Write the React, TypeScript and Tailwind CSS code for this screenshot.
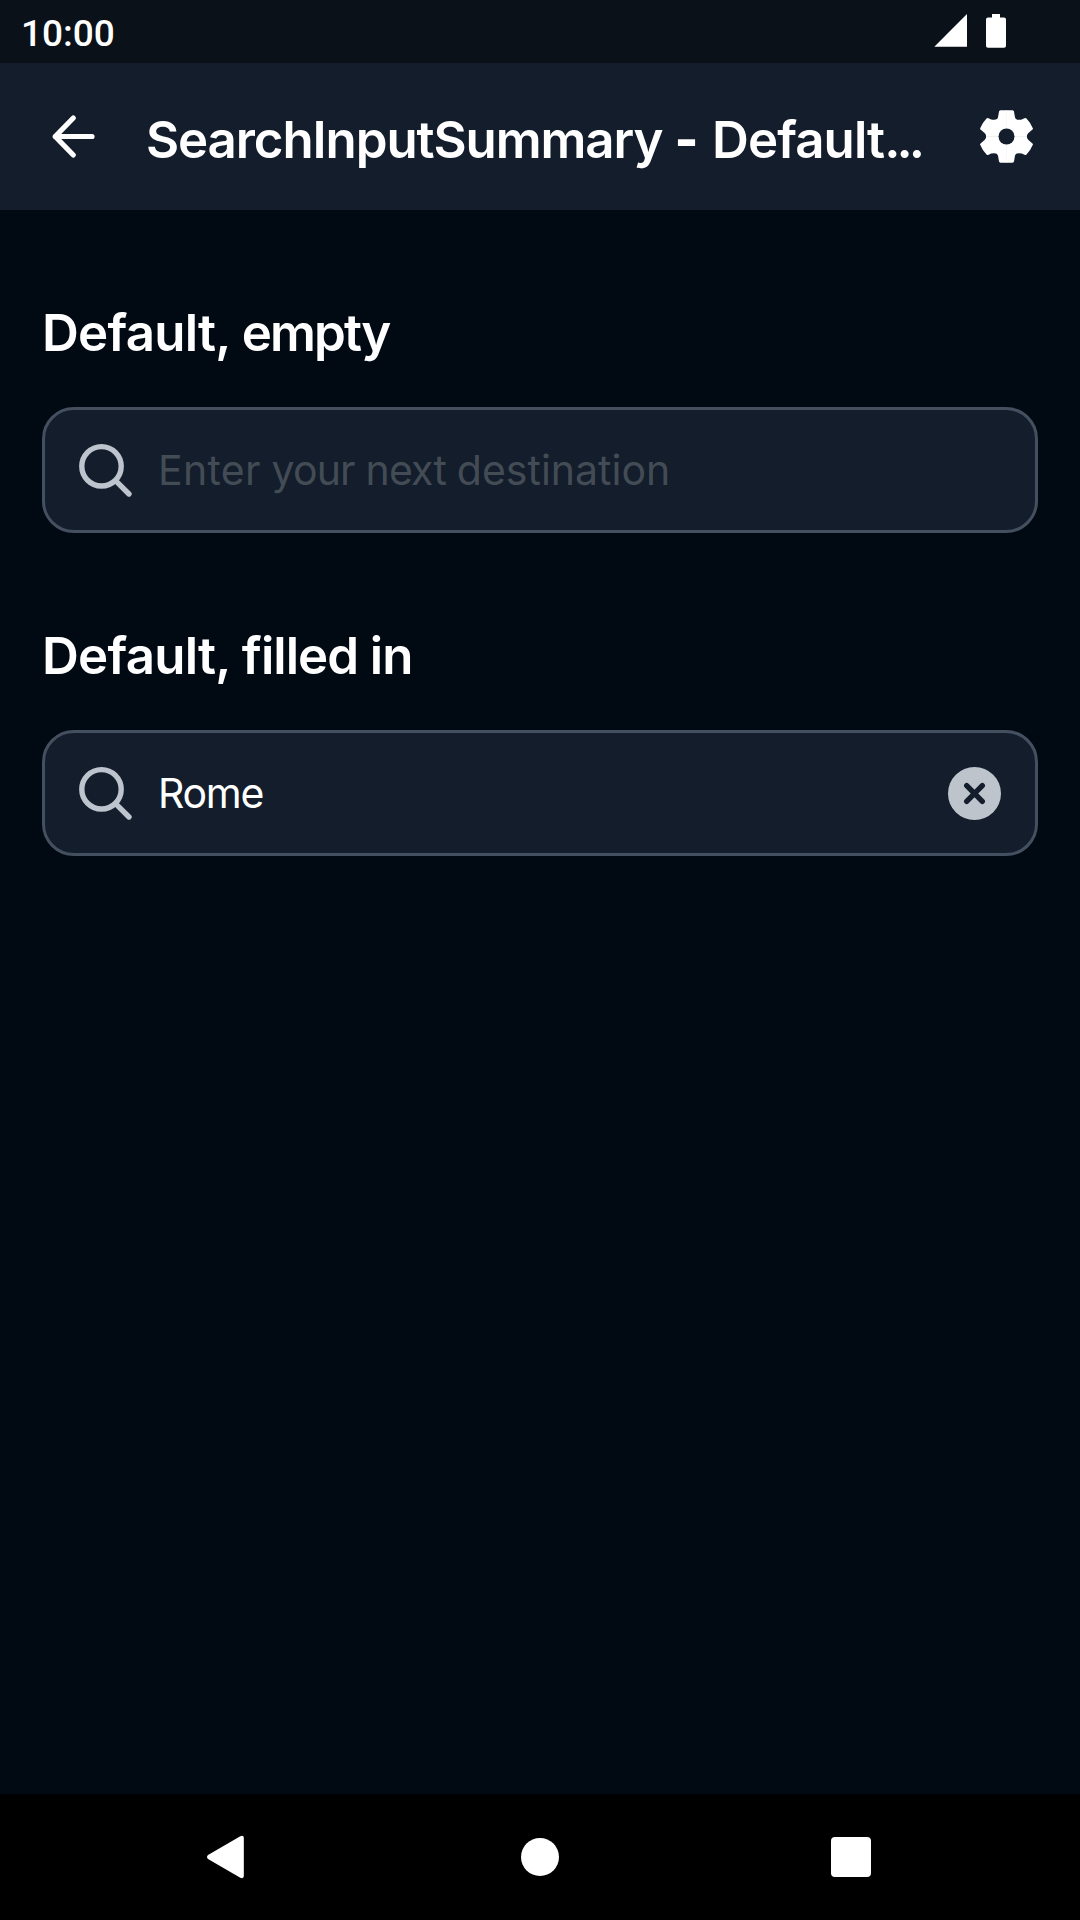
import React from "react";

const GEAR_QUADRANT =
  "M-1 -79L18 -78.500Q22 -78 22.500 -75L25 -60Q26 -50 37 -50Q43 -50 46 -51L54 -55Q57 -57 60 -54Q73 -40 79 -25Q80 -22 77 -20L65 -10Q61 -6 61 1L-1 1Z";

function GearIcon() {
  return (
    <svg className="size-[63px]" viewBox="-94.5 -94.5 189 189" fill="#fff">
      <path d={GEAR_QUADRANT} />
      <path d={GEAR_QUADRANT} transform="scale(-1 1)" />
      <path d={GEAR_QUADRANT} transform="scale(1 -1)" />
      <path d={GEAR_QUADRANT} transform="scale(-1 -1)" />
      <circle r="24" fill="#131d2b" />
    </svg>
  );
}

function SearchIcon() {
  return (
    <svg className="size-[63px] shrink-0" viewBox="0 0 63 63" fill="none" stroke="#bdc4cd" strokeWidth="5.4" strokeLinecap="round">
      <circle cx="27.500" cy="27.300" r="19.700" />
      <path d="M42.300 42.300L55 55" />
    </svg>
  );
}

function ClearIcon() {
  return (
    <svg className="size-[63px] shrink-0" viewBox="0 0 63 63">
      <circle cx="31.500" cy="31.500" r="26.500" fill="#bdc4cb" />
      <path d="M23.700 23.700L39.300 39.300M39.300 23.700L23.700 39.300" stroke="#131d2b" strokeWidth="5.400" strokeLinecap="round" />
    </svg>
  );
}

function StatusBar() {
  return (
    <div className="flex h-[63px] items-center justify-between bg-[#0a1119] pl-[21px] pr-[73px]">
      <span className="mt-[3px] font-[Roboto] text-[37px] leading-none font-medium">10:00</span>
      <div className="flex h-full gap-[18px]">
        <svg className="h-[63px] w-[33px]" viewBox="0 0 33 63" fill="#fff">
          <path d="M0.300 46.800L33 14V46.800Z" />
        </svg>
        <svg className="h-[63px] w-[22px]" viewBox="0 0 22 63" fill="#fff">
          <path d="M7 14h8v3.500h4q2 0 2 2v26.300q0 2 -2 2h-16q-2 0 -2 -2v-26.300q0 -2 2 -2h4z" />
        </svg>
      </div>
    </div>
  );
}

function Field({ title, children }: { title: React.ReactNode; children: React.ReactNode }) {
  return (
    <section className="flex flex-col gap-[42px]">
      <h2 className="h-[64px] text-[51px] leading-[64px] font-semibold whitespace-nowrap">
        <span className="tracking-[-0.75px]">Default, </span>
        {title}
      </h2>
      <div className="flex h-[126px] items-center gap-[21px] rounded-[32px] border-[3px] border-[#44505f] bg-[#131d2b] pr-[29px] pl-[29px] text-[41px]">
        <SearchIcon />
        {children}
      </div>
    </section>
  );
}

export default function App() {
  return (
    <div className="flex h-[1920px] w-[1080px] flex-col bg-[#010913] font-[Inter,sans-serif] text-white">
      <StatusBar />
      <header className="flex h-[147px] items-center bg-[#131d2b] pr-[42px] pl-[42px]">
        <svg className="size-[63px] shrink-0" viewBox="0 0 63 63" fill="none" stroke="#fff" strokeWidth="5.200" strokeLinecap="round" strokeLinejoin="round">
          <path d="M31.300 13L13.200 31.500L31.300 50M13.200 31.500H50" />
        </svg>
        <h1 className="mt-[6px] ml-[41px] w-[829px] shrink text-[51px] leading-[64px] font-semibold whitespace-nowrap">
          <span className="tracking-[-1.1px]">SearchInputSummary</span>
          <span className="font-extrabold tracking-[1.1px]"> - </span>
          <span className="tracking-[-0.9px]">Default</span>
          <span className="tracking-[-4px]">...</span>
        </h1>
        <div className="shrink-0">
          <GearIcon />
        </div>
      </header>
      <main className="flex flex-1 flex-col gap-[91px] px-[42px] pt-[91px]">
        <Field title={<span className="tracking-[-1.9px]">empty</span>}>
          <span className="mt-[2px] tracking-[-0.8px] whitespace-nowrap text-[#434c55]">
            <span className="tracking-[0.3px]">Enter</span> your next <span className="tracking-[0px]">destination</span>
          </span>
        </Field>
        <Field title={<span className="tracking-[-1px]">filled in</span>}>
          <span className="mt-[2px] flex-1 tracking-[-1.3px]">Rome</span>
          <ClearIcon />
        </Field>
      </main>
      <nav className="flex h-[126px] items-center bg-black pl-[206px]">
        <svg className="h-[44px] w-[38px]" viewBox="0 0 38 44" fill="#fff">
          <path d="M2 20L34.300 1.200Q37.800 0 37.800 3V41Q37.800 44 34.300 42.800L2 24Q0 22 2 20Z" />
        </svg>
        <div className="ml-[277px] size-[38px] rounded-full bg-white" />
        <div className="ml-[272px] size-[40px] rounded-[4px] bg-white" />
      </nav>
    </div>
  );
}
